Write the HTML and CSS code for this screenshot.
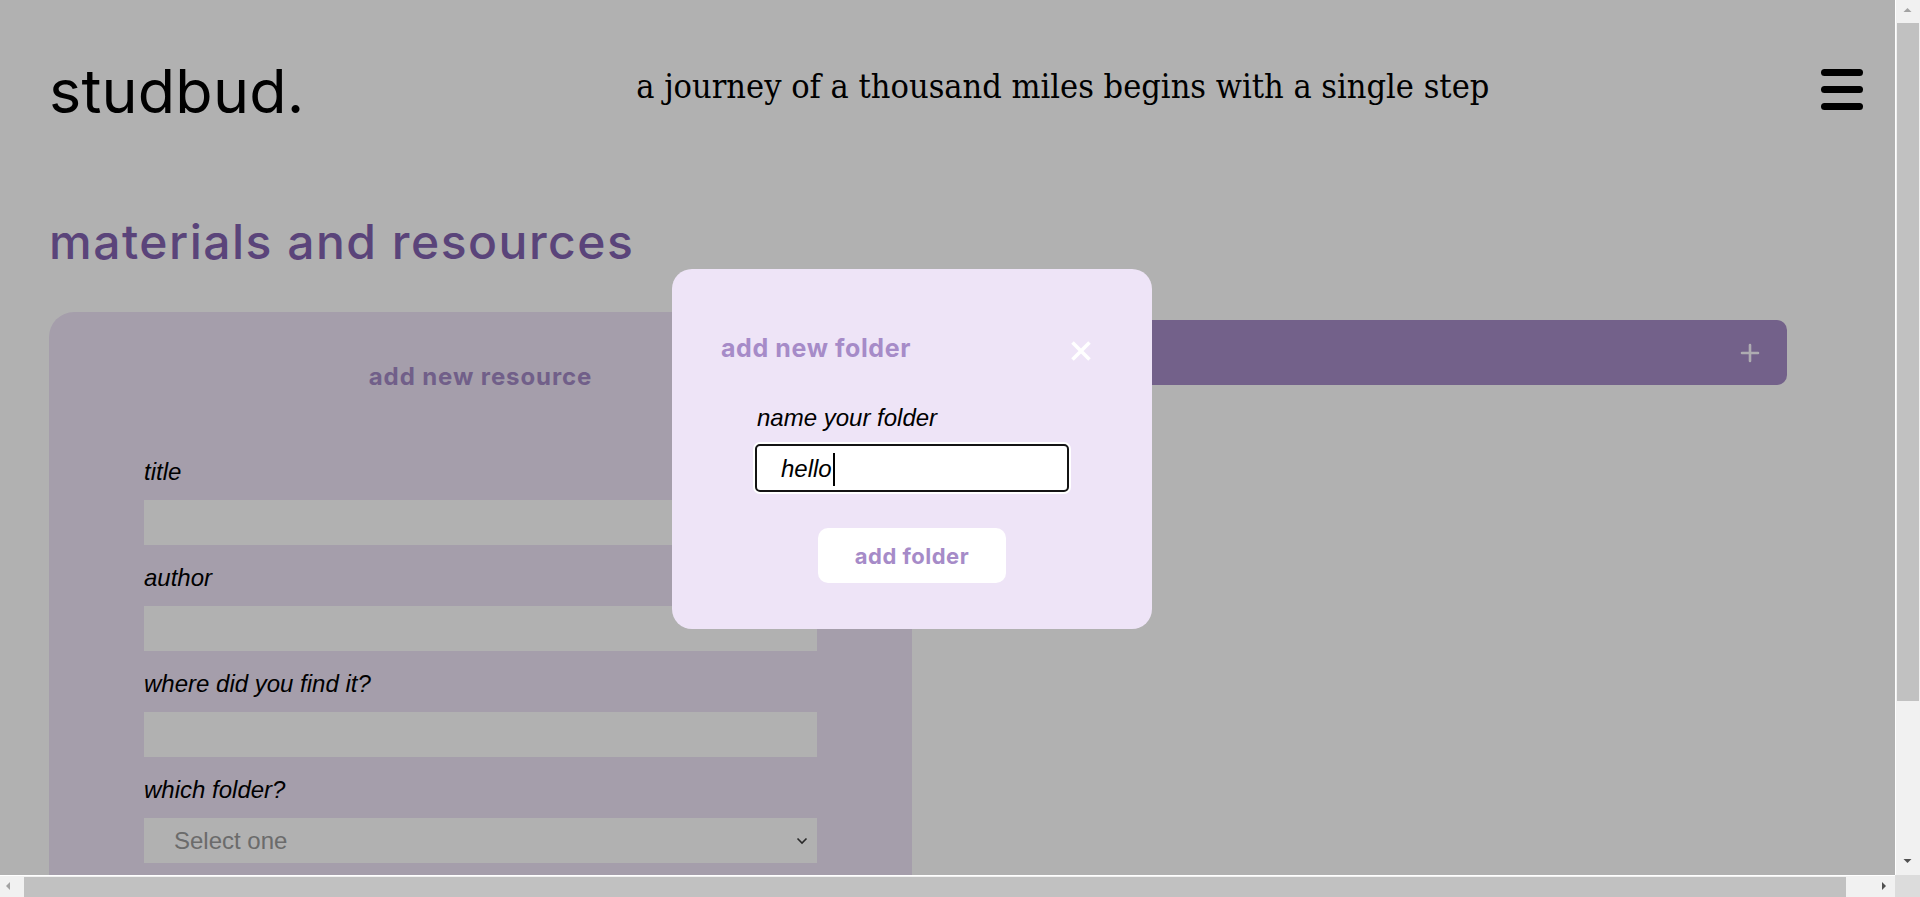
FILE: index.html
```html
<!DOCTYPE html>
<html lang="en">
<head>
<meta charset="utf-8">
<title>studbud. – materials and resources</title>
<link rel="stylesheet" href="styles.css">
</head>
<body>
<div class="page">
  <header class="site-header">
    <div class="logo">studbud.</div>
    <p class="tagline">a journey of a thousand miles begins with a single step</p>
    <button class="menu-btn" aria-label="open menu"><span></span><span></span><span></span></button>
  </header>

  <main class="main">
    <h1 class="page-title">materials and resources</h1>
    <div class="columns">
      <section class="resource-panel">
        <h2 class="panel-title">add new resource</h2>
        <form class="resource-form">
          <div class="field">
            <label class="field-label" for="r-title">title</label>
            <input class="field-input" id="r-title" type="text">
          </div>
          <div class="field">
            <label class="field-label" for="r-author">author</label>
            <input class="field-input" id="r-author" type="text">
          </div>
          <div class="field">
            <label class="field-label" for="r-where">where did you find it?</label>
            <input class="field-input" id="r-where" type="text">
          </div>
          <div class="field">
            <label class="field-label" for="r-folder">which folder?</label>
            <div class="select-wrap">
              <select class="field-select" id="r-folder">
                <option>Select one</option>
              </select>
              <svg class="select-chevron" width="12" height="8" viewBox="0 0 12 8" aria-hidden="true">
                <path d="M1.5 1.5l4.5 4.5 4.5-4.5" fill="none" stroke="#3c3c3c" stroke-width="1.6"/>
              </svg>
            </div>
          </div>
        </form>
      </section>

      <section class="folders">
        <div class="folder-bar">
          <svg class="plus-icon" width="20" height="20" viewBox="0 0 20 20" aria-hidden="true">
            <path d="M10 2v16M2 10h16" stroke="currentColor" stroke-width="2.6" stroke-linecap="round"/>
          </svg>
        </div>
      </section>
    </div>
  </main>
</div>

<div class="overlay"></div>

<div class="modal" role="dialog" aria-label="add new folder">
  <div class="modal-header">
    <h3 class="modal-title">add new folder</h3>
    <button class="close-btn" aria-label="close">
      <svg width="22" height="22" viewBox="0 0 22 22" aria-hidden="true">
        <path d="M2.5 2.5l17 17M19.5 2.5l-17 17" stroke="#ffffff" stroke-width="3.6"/>
      </svg>
    </button>
  </div>
  <div class="modal-body">
    <div class="modal-field">
      <label class="modal-label">name your folder</label>
      <div class="modal-input" role="textbox"><span class="typed">hello</span><span class="caret"></span></div>
    </div>
    <button class="modal-btn" type="button">add folder</button>
  </div>
</div>

<div class="scrollbar scrollbar-v" aria-hidden="true">
  <div class="sb-btn">
    <svg width="25" height="20" viewBox="0 0 25 20"><polygon points="8.5,12 16.5,12 12.5,8" fill="#a3a3a3"/></svg>
  </div>
  <div class="sb-track"><div class="sb-thumb"></div></div>
  <div class="sb-btn">
    <svg width="25" height="20" viewBox="0 0 25 20"><polygon points="8.5,4 16.5,4 12.5,8" fill="#505050"/></svg>
  </div>
</div>
<div class="scrollbar scrollbar-h" aria-hidden="true">
  <div class="sb-btn">
    <svg width="20" height="22" viewBox="0 0 20 22"><polygon points="6,11 10,7 10,15" fill="#a3a3a3"/></svg>
  </div>
  <div class="sb-track"><div class="sb-thumb"></div></div>
  <div class="sb-btn">
    <svg width="20" height="22" viewBox="0 0 20 22"><polygon points="11,11 7,7 7,15" fill="#505050"/></svg>
  </div>
</div>
<div class="scroll-corner" aria-hidden="true"></div>
</body>
</html>
```

FILE: styles.css
```css
* { box-sizing: border-box; }

html, body {
  margin: 0;
  padding: 0;
  background: #ffffff;
}

body {
  font-family: "Liberation Sans", Arial, sans-serif;
  color: #000;
}

/* page */
.page {
  width: 1926px;
}

.site-header {
  display: flex;
  align-items: center;
  justify-content: space-between;
  padding: 55px 63px 0 49px;
}

.logo {
  font-family: Inter, "Noto Sans", sans-serif;
  font-size: 61px;
  line-height: 72px;
  font-weight: 400;
  letter-spacing: 0.2px;
}

.tagline {
  margin: 0 0 10px;
  font-family: "DejaVu Serif", "Liberation Serif", serif;
  font-stretch: condensed;
  font-size: 34px;
  line-height: 40px;
}

.menu-btn {
  display: flex;
  flex-direction: column;
  gap: 10px;
  padding: 0;
  margin: 0 0 4px;
  border: 0;
  background: none;
}
.menu-btn span {
  display: block;
  width: 42px;
  height: 7px;
  border-radius: 4px;
  background: #000;
}

.main {
  padding: 0 139px 0 49px;
}

.page-title {
  margin: 88px 0 44px;
  font-family: Inter, "Noto Sans", sans-serif;
  font-size: 48px;
  line-height: 53px;
  font-weight: 500;
  letter-spacing: 1.5px;
  color: #8262b0;
}

.columns {
  display: grid;
  grid-template-columns: 863px 1fr;
  gap: 12px;
  align-items: start;
}

.resource-panel {
  background: #eee4f7;
  border-radius: 25px;
  padding: 51px 95px 80px;
}

.panel-title {
  margin: 0 0 71px;
  text-align: center;
  font-family: Inter, "Noto Sans", sans-serif;
  font-size: 24px;
  line-height: 28px;
  font-weight: 700;
  letter-spacing: 0.9px;
  color: #a38ac6;
}

.resource-form {
  display: flex;
  flex-direction: column;
  gap: 23px;
}

.field {
  display: flex;
  flex-direction: column;
}

.field-label {
  font-size: 24px;
  line-height: 20px;
  font-style: italic;
  margin-bottom: 18px;
}

.field-input,
.field-select {
  display: block;
  width: 100%;
  height: 45px;
  border: 0;
  border-radius: 0;
  background: #ffffff;
  font-family: "Liberation Sans", Arial, sans-serif;
  font-size: 24px;
  padding: 0 26px;
  outline: none;
}

.select-wrap {
  position: relative;
}

.field-select {
  appearance: none;
  -webkit-appearance: none;
  padding-left: 30px;
  color: #9a9a9a;
}

.select-chevron {
  position: absolute;
  right: 9px;
  top: 19px;
}

.folders {
  padding-top: 8px;
}

.folder-bar {
  display: flex;
  align-items: center;
  justify-content: flex-end;
  height: 65px;
  padding: 0 27px 0 28px;
  border-radius: 10px;
  background: #a68cc7;
}
.plus-icon { color: #fbf8ff; }

/* overlay + modal */
.overlay {
  position: fixed;
  inset: 0;
  background: rgba(0, 0, 0, 0.306);
}

.modal {
  position: fixed;
  left: 672px;
  top: 269px;
  width: 480px;
  height: 360px;
  padding: 63px 0 46px;
  border-radius: 20px;
  background: #eee4f7;
}

.modal-header {
  display: flex;
  align-items: center;
  justify-content: space-between;
  padding: 0 60px 0 49px;
}

.modal-title {
  margin: 0;
  font-family: Inter, "Noto Sans", sans-serif;
  font-size: 25px;
  line-height: 32px;
  font-weight: 700;
  letter-spacing: 0.6px;
  color: #a68bc8;
}

.close-btn {
  display: flex;
  padding: 0;
  margin-top: 5px;
  border: 0;
  background: none;
}

.modal-body {
  display: flex;
  flex-direction: column;
  align-items: center;
  margin-top: 40px;
}

.modal-field {
  display: flex;
  flex-direction: column;
  width: 314px;
}

.modal-label {
  font-size: 24px;
  line-height: 28px;
  font-style: italic;
  padding-left: 2px;
  margin-bottom: 12px;
}

.modal-input {
  display: flex;
  align-items: center;
  height: 48px;
  padding: 2px 24px 0;
  border: 2px solid #141414;
  border-radius: 5px;
  background: #ffffff;
  box-shadow: 0 0 0 2px #ffffff;
  font-size: 24px;
  font-style: italic;
}

.caret {
  display: inline-block;
  width: 2px;
  height: 33px;
  margin-left: 1px;
  background: #000;
}

.modal-btn {
  margin-top: 36px;
  width: 188px;
  height: 55px;
  border: 0;
  border-radius: 10px;
  background: #ffffff;
  color: #a68bc8;
  font-family: Inter, "Noto Sans", sans-serif;
  font-size: 22px;
  font-weight: 700;
  letter-spacing: 0.5px;
}

/* browser scrollbars (drawn) */
.scrollbar {
  position: fixed;
  display: flex;
  background: #f1f1f1;
  z-index: 10;
}
.scrollbar-v {
  top: 0;
  right: 0;
  width: 25px;
  height: 875px;
  flex-direction: column;
  border-left: 1px solid #ffffff;
}
.scrollbar-h {
  left: 0;
  bottom: 0;
  width: 1895px;
  height: 22px;
  border-top: 1px solid #ffffff;
}
.sb-btn {
  flex: none;
  display: flex;
}
.scrollbar-v .sb-btn { height: 20px; margin-left: -1px; }
.scrollbar-h .sb-btn { width: 20px; margin-top: -1px; }
.sb-track {
  flex: 1;
  display: flex;
}
.scrollbar-v .sb-track { padding: 3px 1px 0 1px; }
.scrollbar-h .sb-track { padding: 1px 0 0 4px; }
.sb-thumb {
  background: #c1c1c1;
}
.scrollbar-v .sb-thumb { width: 100%; height: 678px; }
.scrollbar-h .sb-thumb { width: 1822px; height: 100%; }
.scroll-corner {
  position: fixed;
  right: 0;
  bottom: 0;
  width: 25px;
  height: 22px;
  background: #dcdcdc;
  z-index: 10;
}
```
